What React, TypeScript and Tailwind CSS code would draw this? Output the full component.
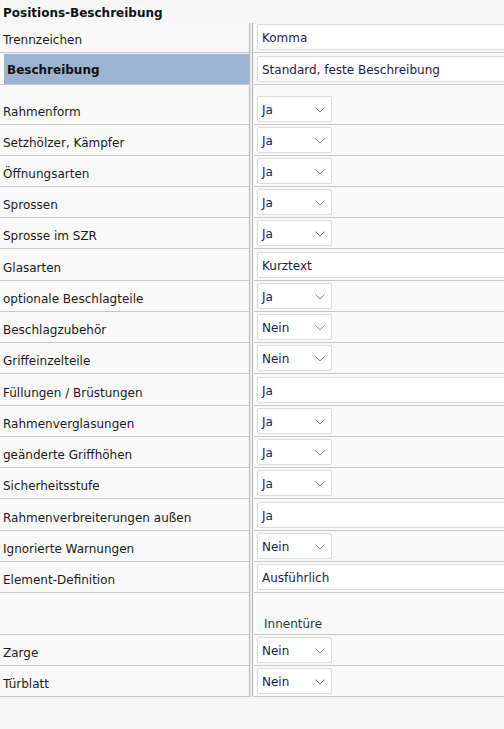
import React from 'react';

type Row = {
    label: string;
    kind: 'text' | 'select' | 'empty';
    value?: string;
    h: string;
    highlight?: boolean;
    note?: string;
};

// Höhen inkl. Trennlinie unten
const rows: Row[] = [
    { label: 'Trennzeichen', kind: 'text', value: 'Komma', h: 'h-[30px]' },
    { label: 'Beschreibung', kind: 'text', value: 'Standard, feste Beschreibung', h: 'h-[32px]', highlight: true },
    { label: 'Rahmenform', kind: 'select', value: 'Ja', h: 'h-[40px]' },
    { label: 'Setzhölzer, Kämpfer', kind: 'select', value: 'Ja', h: 'h-[31px]' },
    { label: 'Öffnungsarten', kind: 'select', value: 'Ja', h: 'h-[31px]' },
    { label: 'Sprossen', kind: 'select', value: 'Ja', h: 'h-[31px]' },
    { label: 'Sprosse im SZR', kind: 'select', value: 'Ja', h: 'h-[31px]' },
    { label: 'Glasarten', kind: 'text', value: 'Kurztext', h: 'h-[32px]' },
    { label: 'optionale Beschlagteile', kind: 'select', value: 'Ja', h: 'h-[31px]' },
    { label: 'Beschlagzubehör', kind: 'select', value: 'Nein', h: 'h-[31px]' },
    { label: 'Griffeinzelteile', kind: 'select', value: 'Nein', h: 'h-[31px]' },
    { label: 'Füllungen / Brüstungen', kind: 'text', value: 'Ja', h: 'h-[32px]' },
    { label: 'Rahmenverglasungen', kind: 'select', value: 'Ja', h: 'h-[31px]' },
    { label: 'geänderte Griffhöhen', kind: 'select', value: 'Ja', h: 'h-[31px]' },
    { label: 'Sicherheitsstufe', kind: 'select', value: 'Ja', h: 'h-[31px]' },
    { label: 'Rahmenverbreiterungen außen', kind: 'text', value: 'Ja', h: 'h-[32px]' },
    { label: 'Ignorierte Warnungen', kind: 'select', value: 'Nein', h: 'h-[31px]' },
    { label: 'Element-Definition', kind: 'text', value: 'Ausführlich', h: 'h-[31px]' },
    { label: '', kind: 'empty', note: 'Innentüre', h: 'h-[42px]' },
    { label: 'Zarge', kind: 'select', value: 'Nein', h: 'h-[31px]' },
    { label: 'Türblatt', kind: 'select', value: 'Nein', h: 'h-[31px]' },
];

function Chevron() {
    return (
        <svg width="10" height="6" viewBox="0 0 10 6" className="text-[#8a8a8a]">
            <path d="M0.5 0.5 L5 5 L9.5 0.5" fill="none" stroke="currentColor" strokeWidth="1" />
        </svg>
    );
}

function Value({ row }: { row: Row }) {
    if (row.kind === 'empty') {
        return (
            <div className="flex h-full items-end pb-[4px] pl-[7px] text-[#333]">
                {row.note}
            </div>
        );
    }
    if (row.kind === 'select') {
        return (
            <div className="flex h-full items-end pb-[2px]">
                <div className="flex h-[26px] w-[75px] items-center justify-between rounded-[2px] border border-[#dcdcdc] bg-white pl-[4px] pr-[6px] pt-[2px] text-[#1c1c48]">
                    <span>{row.value}</span>
                    <Chevron />
                </div>
            </div>
        );
    }
    return (
        <div className="flex h-full items-end pb-[2px]">
            <div className="-mr-2 flex h-[26px] flex-1 items-center rounded-[2px] border border-[#dcdcdc] bg-white pl-[4px] pt-[2px] text-[#1c1c48]">
                {row.value}
            </div>
        </div>
    );
}

export default function App() {
    return (
        <div
            className="h-[729px] w-[504px] overflow-hidden bg-[#f7f7f7] text-[12px] leading-none text-[#1a1a1a]"
            style={{ fontFamily: '"DejaVu Sans", sans-serif' }}
        >
            <div className="flex h-[23px] items-center pl-[3px] pt-[2px] font-bold text-[#111]">
                Positions-Beschreibung
            </div>

            <div className="flex">
                {/* linke Spalte */}
                <div className="w-[249px] bg-[#f9f9f9]">
                    {rows.map((r, i) => (
                        <div key={i} className={`${r.h} border-b border-[#c6c6c6] pt-[1px]`}>
                            {r.highlight ? (
                                <div className="ml-[4px] flex h-full items-center bg-[#9bb4d2] pl-[3px] pt-[2px] font-bold text-[#111]">
                                    {r.label}
                                </div>
                            ) : (
                                <div className="flex h-full items-end pb-[6px] pl-[3px]">{r.label}</div>
                            )}
                        </div>
                    ))}
                </div>

                {/* Doppel-Trennlinie */}
                <div className="flex w-[5px]">
                    <div className="w-[1px] bg-[#b8b8b8]" />
                    <div className="w-[2px] bg-[#ececec]" />
                    <div className="w-[1px] bg-[#b8b8b8]" />
                    <div className="w-[1px] bg-[#f4f4f4]" />
                </div>

                {/* rechte Spalte */}
                <div className="flex-1 bg-[#f9f9f9] pl-[3px]">
                    {rows.map((r, i) => (
                        <div key={i} className={`${r.h} -ml-[3px] border-b border-[#c6c6c6] pl-[3px]`}>
                            <Value row={r} />
                        </div>
                    ))}
                </div>
            </div>
        </div>
    );
}
